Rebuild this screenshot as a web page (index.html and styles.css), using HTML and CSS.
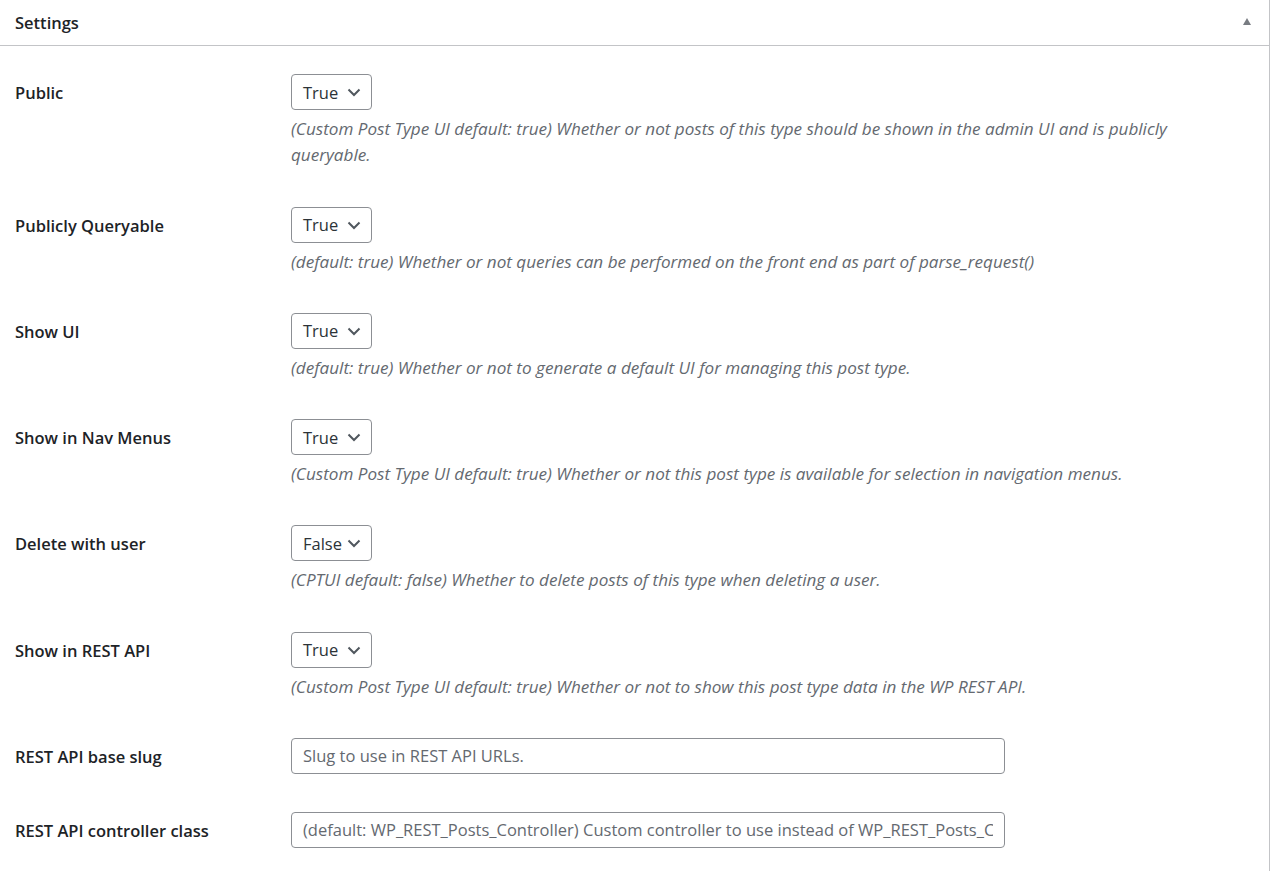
FILE: index.html
```html
<!DOCTYPE html>
<html lang="en">
<head>
<meta charset="utf-8">
<title>Settings</title>
<link rel="stylesheet" href="styles.css">
</head>
<body>
<div class="postbox">
  <div class="postbox-header">
    <h2 class="postbox-title">Settings</h2>
    <span class="toggle-indicator" aria-hidden="true"></span>
  </div>
  <div class="inside">
    <div class="form-table">
      <div class="row">
        <div class="label">Public</div>
        <div class="field">
          <div class="select"><span>True</span><svg class="chev" width="14" height="9" viewBox="0 0 14 9"><path d="M1.5 1.5 L7 7 L12.5 1.5" fill="none" stroke="#50575e" stroke-width="2"/></svg></div>
          <p class="description">(Custom Post Type UI default: true) Whether or not posts of this type should be shown in the admin UI and is publicly queryable.</p>
        </div>
      </div>
      <div class="row">
        <div class="label">Publicly Queryable</div>
        <div class="field">
          <div class="select"><span>True</span><svg class="chev" width="14" height="9" viewBox="0 0 14 9"><path d="M1.5 1.5 L7 7 L12.5 1.5" fill="none" stroke="#50575e" stroke-width="2"/></svg></div>
          <p class="description">(default: true) Whether or not queries can be performed on the front end as part of parse_request()</p>
        </div>
      </div>
      <div class="row">
        <div class="label">Show UI</div>
        <div class="field">
          <div class="select"><span>True</span><svg class="chev" width="14" height="9" viewBox="0 0 14 9"><path d="M1.5 1.5 L7 7 L12.5 1.5" fill="none" stroke="#50575e" stroke-width="2"/></svg></div>
          <p class="description">(default: true) Whether or not to generate a default UI for managing this post type.</p>
        </div>
      </div>
      <div class="row">
        <div class="label">Show in Nav Menus</div>
        <div class="field">
          <div class="select"><span>True</span><svg class="chev" width="14" height="9" viewBox="0 0 14 9"><path d="M1.5 1.5 L7 7 L12.5 1.5" fill="none" stroke="#50575e" stroke-width="2"/></svg></div>
          <p class="description">(Custom Post Type UI default: true) Whether or not this post type is available for selection in navigation menus.</p>
        </div>
      </div>
      <div class="row">
        <div class="label">Delete with user</div>
        <div class="field">
          <div class="select"><span>False</span><svg class="chev" width="14" height="9" viewBox="0 0 14 9"><path d="M1.5 1.5 L7 7 L12.5 1.5" fill="none" stroke="#50575e" stroke-width="2"/></svg></div>
          <p class="description">(CPTUI default: false) Whether to delete posts of this type when deleting a user.</p>
        </div>
      </div>
      <div class="row">
        <div class="label">Show in REST API</div>
        <div class="field">
          <div class="select"><span>True</span><svg class="chev" width="14" height="9" viewBox="0 0 14 9"><path d="M1.5 1.5 L7 7 L12.5 1.5" fill="none" stroke="#50575e" stroke-width="2"/></svg></div>
          <p class="description">(Custom Post Type UI default: true) Whether or not to show this post type data in the WP REST API.</p>
        </div>
      </div>
      <div class="row">
        <div class="label">REST API base slug</div>
        <div class="field">
          <input class="text-input" type="text" placeholder="Slug to use in REST API URLs.">
        </div>
      </div>
      <div class="row">
        <div class="label">REST API controller class</div>
        <div class="field">
          <input class="text-input" type="text" placeholder="(default: WP_REST_Posts_Controller) Custom controller to use instead of WP_REST_Posts_Controller.">
        </div>
      </div>
    </div>
  </div>
</div>
</body>
</html>
```

FILE: styles.css
```css
html, body {
  margin: 0;
  padding: 0;
  background: #ffffff;
}

body {
  font-family: "Open Sans", "Noto Sans", sans-serif;
  color: #1d2327;
}

.postbox {
  width: 1270px;
  box-sizing: border-box;
  border-right: 1px solid #c3c4c7;
  min-height: 871px;
}

.postbox-header {
  height: 45px;
  border-bottom: 1px solid #c3c4c7;
  display: flex;
  align-items: center;
  justify-content: space-between;
  padding: 0 18px 0 15px;
}

.postbox-title {
  margin: 0;
  font-size: 16.5px;
  font-weight: 600;
  line-height: 1.4;
  color: #1d2327;
}

.toggle-indicator {
  width: 0;
  height: 0;
  border-left: 4px solid transparent;
  border-right: 4px solid transparent;
  border-bottom: 7px solid #787c82;
  margin-top: -3px;
}

.inside {
  padding: 9px 0 0 15px;
}

.form-table {
  display: flex;
  flex-direction: column;
}

.row {
  display: grid;
  grid-template-columns: 276px 1fr;
  padding: 19px 0;
}

.label {
  height: 36px;
  display: flex;
  align-items: center;
  padding-top: 1px;
  box-sizing: border-box;
  font-size: 16.5px;
  font-weight: 600;
  color: #1d2327;
}

.field {
  padding-right: 40px;
}

.select {
  width: 81px;
  height: 36px;
  box-sizing: border-box;
  border: 1px solid #8c8f94;
  border-radius: 4px;
  display: flex;
  align-items: center;
  justify-content: space-between;
  padding: 0 10px 0 11px;
  font-size: 16.5px;
  color: #2c3338;
}

.chev {
  display: block;
  margin-top: 1px;
}

.description {
  margin: 6px 0 0;
  font-size: 17.1px;
  line-height: 26.25px;
  font-style: italic;
  color: #646970;
}

.text-input {
  display: block;
  width: 714px;
  height: 36px;
  box-sizing: border-box;
  border: 1px solid #8c8f94;
  border-radius: 4px;
  padding: 0 11px;
  margin: 0;
  font-family: "Open Sans", "Noto Sans", sans-serif;
  font-size: 16.5px;
  color: #2c3338;
  background: #fff;
  outline: none;
}

.text-input::placeholder {
  color: #646970;
  opacity: 1;
}
```
